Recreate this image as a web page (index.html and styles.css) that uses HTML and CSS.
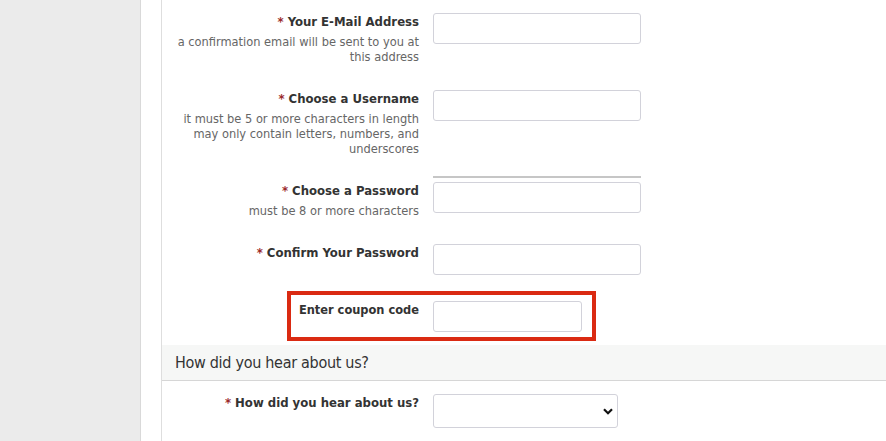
FILE: index.html
```html
<!DOCTYPE html>
<html>
<head>
<meta charset="utf-8">
<link rel="stylesheet" href="styles.css">
</head>
<body>
<div class="page">
  <aside class="sidebar"></aside>
  <main class="main">
    <div class="panel">
      <div class="row">
        <div class="label-col">
          <div class="label"><span class="req">*</span> Your E-Mail Address</div>
          <div class="help">a confirmation email will be sent to you at this address</div>
        </div>
        <div class="field"><input class="input" type="text"></div>
      </div>
      <div class="row">
        <div class="label-col">
          <div class="label"><span class="req">*</span> Choose a Username</div>
          <div class="help">it must be 5 or more characters in length may only contain letters, numbers, and underscores</div>
        </div>
        <div class="field"><input class="input" type="text"></div>
      </div>
      <div class="row">
        <div class="label-col">
          <div class="label"><span class="req">*</span> Choose a Password</div>
          <div class="help">must be 8 or more characters</div>
        </div>
        <div class="field"><div class="meter"></div><input class="input" type="password"></div>
      </div>
      <div class="row">
        <div class="label-col">
          <div class="label"><span class="req">*</span> Confirm Your Password</div>
        </div>
        <div class="field"><input class="input" type="password"></div>
      </div>
      <div class="row coupon-row">
        <div class="label-col">
          <div class="label">Enter coupon code</div>
        </div>
        <div class="field"><input class="input input-short" type="text"></div>
        <div class="highlight"></div>
      </div>
      <div class="section-head">How did you hear about us?</div>
      <div class="row last-row">
        <div class="label-col">
          <div class="label"><span class="req">*</span> How did you hear about us?</div>
        </div>
        <div class="field">
          <div class="select-wrap">
            <select class="select"><option></option></select>
            <svg class="chev" width="10" height="7" viewBox="0 0 10 7"><path d="M1 1.2 L5 5.2 L9 1.2" fill="none" stroke="#111" stroke-width="2.2"/></svg>
          </div>
        </div>
      </div>
    </div>
  </main>
</div>
</body>
</html>
```

FILE: styles.css
```css
html, body {
  margin: 0;
  padding: 0;
  height: 100%;
}
body {
  font-family: "DejaVu Sans Condensed", "DejaVu Sans", Verdana, sans-serif;
  color: #333;
  background: #fff;
  overflow: hidden;
}
.page {
  display: flex;
  height: 441px;
}
.sidebar {
  width: 140px;
  flex: 0 0 140px;
  background: #ebebeb;
  border-right: 1px solid #d9d9d9;
}
.main {
  flex: 1;
  padding-left: 20px;
  display: flex;
}
.panel {
  flex: 1;
  border-left: 1px solid #dedede;
}
.row {
  display: flex;
  gap: 14px;
  padding: 13px 0;
  position: relative;
}
.label-col {
  width: 257px;
  flex: 0 0 257px;
  text-align: right;
}
.label {
  font-weight: bold;
  font-size: 13px;
  line-height: 17px;
  color: #333;
}
.coupon-row .label {
  font-size: 12.7px;
}
.req {
  color: #9b2b2b;
}
.help {
  font-size: 12.7px;
  line-height: 15px;
  color: #666;
  margin-top: 4px;
  padding-left: 4px;
}
.field {
  position: relative;
}
.input {
  display: block;
  box-sizing: border-box;
  width: 208px;
  height: 31px;
  border: 1px solid #d2d2da;
  border-radius: 3px;
  background: #fff;
  margin: 0;
  padding: 4px 8px;
}
.input-short {
  width: 149px;
}
.meter {
  position: absolute;
  left: 0;
  top: -6px;
  width: 208px;
  height: 2px;
  background: #c6c6c6;
}
.highlight {
  position: absolute;
  left: 125px;
  top: 3px;
  width: 309px;
  height: 50px;
  box-sizing: border-box;
  border: 4px solid #da2a12;
  pointer-events: none;
}
.section-head {
  background: #f6f7f6;
  border-bottom: 1px solid #d6d6d6;
  height: 35px;
  padding-left: 13px;
  font-size: 16px;
  letter-spacing: -0.3px;
  line-height: 35px;
  color: #333;
}
.last-row {
  border-bottom: 1px solid #eeeeee;
}
.select-wrap {
  position: relative;
  width: 185px;
}
.select {
  -webkit-appearance: none;
  appearance: none;
  display: block;
  box-sizing: border-box;
  width: 185px;
  height: 34px;
  border: 1px solid #d2d2da;
  border-radius: 3px;
  background: #fff;
  margin: 0;
}
.chev {
  position: absolute;
  right: 5px;
  top: 14px;
  pointer-events: none;
}
```
